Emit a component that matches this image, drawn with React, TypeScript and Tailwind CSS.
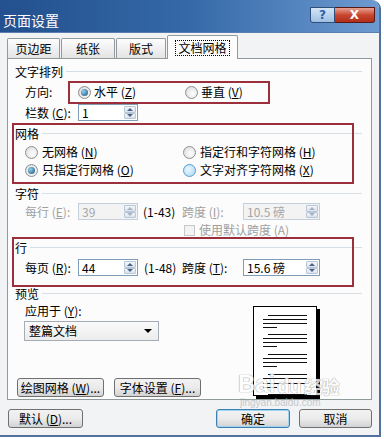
import React from 'react';

// --- small helpers ---
const Mn = ({ t, k, tail = '' }: { t: string; k: string; tail?: string }) => (
  <>
    {t} (<span className="underline">{k}</span>){tail}
  </>
);

const Radio = ({ on = false, hot = false }: { on?: boolean; hot?: boolean }) => (
  <span
    className={`w-[13px] h-[13px] rounded-full border flex items-center justify-center shrink-0 ${
      hot ? 'border-[#5a9acb] bg-[radial-gradient(circle_at_40%_40%,#eaf6fd,#a9d7f3)]' : 'border-[#8e8f8f] bg-[radial-gradient(circle_at_60%_60%,#ffffff,#d6d6d6)]'
    }`}
  >
    {on && <span className="w-[7px] h-[7px] rounded-full bg-[radial-gradient(circle_at_35%_35%,#8fd0f0,#1b4f78)]" />}
  </span>
);

const Arrow = ({ up, off }: { up: boolean; off?: boolean }) => (
  <div className="flex-1 flex items-center justify-center rounded-[1px] border border-[#b8c7d8] bg-gradient-to-b from-[#f4f7fb] to-[#d9e3ee]">
    <span
      className={`w-0 h-0 border-x-[3px] border-x-transparent ${
        up
          ? off ? 'border-b-[3px] border-b-[#a9b3c0]' : 'border-b-[3px] border-b-[#4d6185]'
          : off ? 'border-t-[3px] border-t-[#a9b3c0]' : 'border-t-[3px] border-t-[#4d6185]'
      }`}
    />
  </div>
);

const Spin = ({ v, w, off = false }: { v: string; w: string; off?: boolean }) => (
  <div className={`${w} h-[17px] border flex shrink-0 ${off ? 'border-[#c5d0da] bg-[#f3f3f3] text-[#a6a6a6]' : 'border-[#7f9db9] bg-white text-black'}`}>
    <span className="flex-1 pl-[3px] text-[12px] leading-[15px]">{v}</span>
    <div className="w-[14px] flex flex-col p-px">
      <Arrow up off={off} />
      <Arrow up={false} off={off} />
    </div>
  </div>
);

const Header = ({ text, mt }: { text: string; mt: string }) => (
  <div className={`flex items-center h-[14px] ${mt}`}>
    <span className="leading-[14px]">{text}</span>
    <span className="flex-1 ml-[3px] h-[2px] border-t border-[#d5dfe5] border-b-white" />
  </div>
);

const Btn = ({ children, w, def = false }: { children: React.ReactNode; w: string; def?: boolean }) => (
  <div
    className={`${w} h-[19px] rounded-[3px] border flex items-center justify-center shrink-0 leading-[14px] bg-gradient-to-b from-[#f2f2f2] via-[#ebebeb] to-[#d3d3d3] ${
      def ? 'border-[#3c7fb1] shadow-[inset_0_0_0_1px_#9fd3f2]' : 'border-[#707070]'
    }`}
  >
    {children}
  </div>
);

const Tab = ({ label, w, active = false }: { label: string; w: string; active?: boolean }) =>
  active ? (
    <div className={`${w} h-[24px] -mb-px relative z-10 border border-b-0 border-[#919b9c] bg-[#fcfcfc] rounded-t-[2px] flex items-center justify-center`}>
      <span className="border border-dotted border-black px-[2px] leading-[14px]">{label}</span>
    </div>
  ) : (
    <div className={`${w} h-[20px] border border-b-0 border-[#919b9c] rounded-t-[2px] bg-gradient-to-b from-[#fdfdfd] to-[#e4e4e4] flex items-center justify-center leading-[14px]`}>
      {label}
    </div>
  );

// preview page lines: [y, indent?, short?]
const lines: [number, boolean, boolean][] = [
  [9, true, false], [13, false, false], [17, false, false], [21, false, true],
  [28, true, false], [32, false, false], [36, false, false], [40, false, true],
  [48, true, false], [52, false, false], [56, false, false], [60, false, true],
  [68, true, false], [72, false, false], [77, false, false], [81, false, true],
  [88, true, false],
];

const PreviewPage = () => (
  <div className="w-[64px] h-[90px] bg-white border border-black shadow-[3px_3px_0_#000]">
    <svg width="62" height="88" viewBox="0 0 62 88">
      {lines.map(([y, ind, short]) => (
        <line key={y} x1={ind ? 14 : 9} x2={short ? 23 : 53} y1={y - 0.5} y2={y - 0.5} stroke="#111" strokeWidth="1" />
      ))}
    </svg>
  </div>
);

// --- main ---
export default function App() {
  return (
    <div className="w-[384px] h-[439px] bg-white relative overflow-hidden text-[12px] text-black font-['Noto_Sans_CJK_SC','Noto_Sans',sans-serif]">
      <div className="w-[381px] h-[437px] flex flex-col border-r-[2px] border-b-[2px] border-[#4f719b] rounded-tr-[9px] bg-[#f2f3f4] overflow-hidden">
        {/* Title bar */}
        <div className="h-[33px] shrink-0 flex items-start justify-between bg-gradient-to-r from-[#23508e] via-[#3569a8] to-[#6d9ad0] pr-[4px] border-b border-[#5a7fb0]">
          <span className="mt-[12px] ml-[3px] text-white text-[14px] leading-[16px]">页面设置</span>
          <div className="flex mt-[7px]">
            <div className="w-[25px] h-[16px] rounded-bl-[3px] border border-[#2d4f7a] bg-gradient-to-b from-[#d6e5f5] to-[#9ebfe3] flex items-center justify-center text-[12px] leading-[12px] font-bold text-[#2b63a4] font-['DejaVu_Sans',sans-serif]">?</div>
            <div className="w-[40px] h-[16px] rounded-br-[3px] border border-l-0 border-[#5a1a14] bg-gradient-to-b from-[#e8a093] via-[#c8462f] to-[#b32d18] flex items-center justify-center text-white text-[12px] leading-[12px] font-bold font-['DejaVu_Sans',sans-serif]">X</div>
          </div>
        </div>

        {/* Tabs */}
        <div className="flex items-end gap-px pl-[7px] mt-[2px] h-[23px]">
          <Tab label="页边距" w="w-[53px]" />
          <Tab label="纸张" w="w-[54px]" />
          <Tab label="版式" w="w-[50px]" />
          <Tab label="文档网格" w="w-[71px]" active />
        </div>

        {/* Tab panel */}
        <div className="ml-[7px] w-[365px] h-[342px] border border-[#919b9c] bg-[#fcfcfc] pl-[7px] pr-[9px] flex flex-col">
          <Header text="文字排列" mt="mt-[6px]" />
          <div className="flex items-center h-[22px] mt-[2px] pl-[10px]">
            <span className="w-[53px]">方向:</span>
            <div className="w-[107px] flex items-center gap-[3px]"><Radio on /><span><Mn t="水平" k="Z" /></span></div>
            <div className="flex items-center gap-[3px]"><Radio /><span><Mn t="垂直" k="V" /></span></div>
          </div>
          <div className="flex items-center h-[17px] mt-[1px] pl-[10px]">
            <span className="w-[53px]"><Mn t="栏数" k="C" tail=":" /></span>
            <Spin v="1" w="w-[60px]" />
          </div>

          <Header text="网格" mt="mt-[6px]" />
          <div className="flex items-center h-[16px] mt-[3px] pl-[10px]">
            <div className="w-[158px] flex items-center gap-[4px]"><Radio /><span><Mn t="无网格" k="N" /></span></div>
            <div className="flex items-center gap-[4px]"><Radio /><span><Mn t="指定行和字符网格" k="H" /></span></div>
          </div>
          <div className="flex items-center h-[16px] mt-[2px] pl-[10px]">
            <div className="w-[158px] flex items-center gap-[4px]"><Radio on /><span><Mn t="只指定行网格" k="O" /></span></div>
            <div className="flex items-center gap-[4px]"><Radio hot /><span><Mn t="文字对齐字符网格" k="X" /></span></div>
          </div>

          <Header text="字符" mt="mt-[9px]" />
          <div className="flex items-center h-[17px] mt-[2px] pl-[10px]">
            <span className="w-[53px] text-[#a0a0a0]"><Mn t="每行" k="E" tail=":" /></span>
            <Spin v="39" w="w-[60px]" off />
            <span className="w-[44px] pl-[5px]">(1-43)</span>
            <span className="w-[61px] text-[#a0a0a0]"><Mn t="跨度" k="I" tail=":" /></span>
            <Spin v="10.5 磅" w="w-[77px]" off />
          </div>
          <div className="flex items-center h-[14px] mt-[3px] pl-[169px] gap-[4px] text-[#a0a0a0]">
            <span className="w-[11px] h-[11px] border border-[#c8c8c8] bg-[#f3f3f3] shrink-0" />
            <span className="leading-[14px]">使用默认跨度 (A)</span>
          </div>

          <Header text="行" mt="mt-[4px]" />
          <div className="flex items-center h-[17px] mt-[4px] pl-[10px]">
            <span className="w-[53px]"><Mn t="每页" k="R" tail=":" /></span>
            <Spin v="44" w="w-[60px]" />
            <span className="w-[44px] pl-[6px]">(1-48)</span>
            <span className="w-[61px]"><Mn t="跨度" k="T" tail=":" /></span>
            <Spin v="15.6 磅" w="w-[77px]" />
          </div>

          <Header text="预览" mt="mt-[11px]" />
          <div className="flex flex-1">
            <div className="flex flex-col w-[238px]">
              <span className="mt-[3px] ml-[10px] leading-[14px]"><Mn t="应用于" k="Y" tail=":" /></span>
              <div className="mt-[3px] ml-[9px] w-[135px] h-[20px] border border-[#a5acb5] bg-gradient-to-b from-[#fafafa] to-[#ececec] flex items-center pl-[4px] pr-[6px]">
                <span className="flex-1 leading-[14px]">整篇文档</span>
                <span className="w-0 h-0 border-x-[4px] border-x-transparent border-t-[4px] border-t-black" />
              </div>
              <div className="flex gap-[10px] mt-[37px] ml-[2px]">
                <Btn w="w-[87px]"><Mn t="绘图网格" k="W" tail="..." /></Btn>
                <Btn w="w-[87px]"><Mn t="字体设置" k="F" tail="..." /></Btn>
              </div>
            </div>
            <div className="mt-[5px]">
              <PreviewPage />
            </div>
          </div>
        </div>

        {/* Bottom buttons */}
        <div className="flex items-center mt-[9px] pl-[8px]">
          <Btn w="w-[75px]"><Mn t="默认" k="D" tail="..." /></Btn>
          <div className="ml-[133px]"><Btn w="w-[74px]" def>确定</Btn></div>
          <div className="ml-[9px]"><Btn w="w-[73px]">取消</Btn></div>
        </div>
      </div>

      {/* annotation boxes drawn over the dialog */}
      <div className="absolute left-[68px] top-[81px] w-[202px] h-[23px] border-2 border-[#9c2f3c]" />
      <div className="absolute left-[12px] top-[123px] w-[342px] h-[61px] border-2 border-[#9c2f3c]" />
      <div className="absolute left-[12px] top-[237px] w-[342px] h-[50px] border-2 border-[#9c2f3c]" />

      {/* watermark */}
      <div className="absolute left-[238px] top-[372px] flex items-end gap-[2px] text-white opacity-80 [text-shadow:0_0_1px_#8a8a8a,0_0_1px_#8a8a8a] font-['Liberation_Sans',sans-serif]">
        <span className="text-[24px] leading-[24px] font-bold">Bai</span>
        <span className="text-[20px] leading-[20px] font-bold">du</span>
        <span className="text-[18px] leading-[20px] font-bold font-['Noto_Sans_CJK_SC',sans-serif]">经验</span>
      </div>
      <div className="absolute left-[240px] top-[398px] text-[10px] leading-[10px] text-[#b8bec6] opacity-80 font-['Liberation_Sans',sans-serif]">jingyan.baidu.com</div>
    </div>
  );
}
